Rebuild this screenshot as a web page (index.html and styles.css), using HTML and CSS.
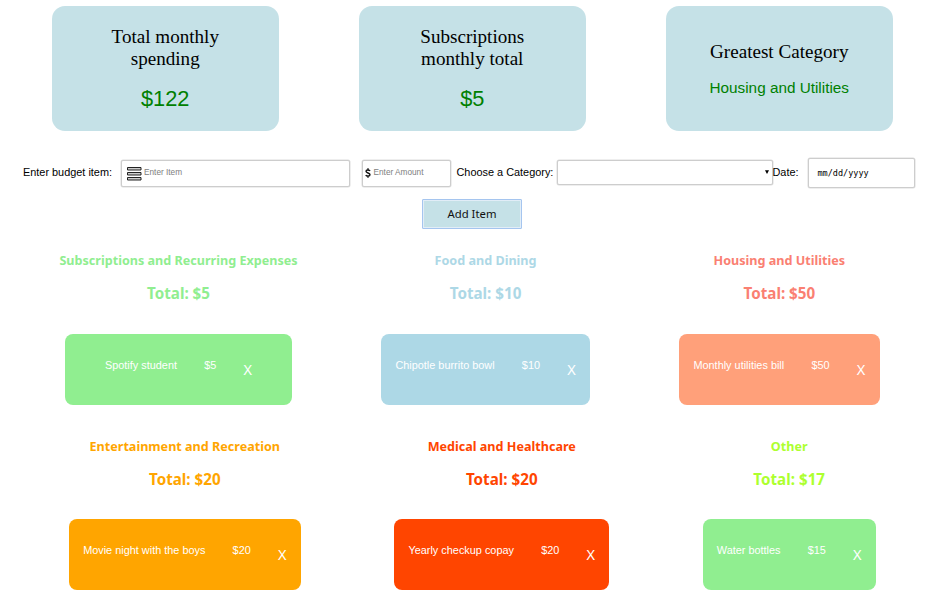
FILE: index.html
```html
<!DOCTYPE html>
<html lang="en">
<head>
<meta charset="utf-8">
<title>Budget</title>
<link rel="stylesheet" href="styles.css">
</head>
<body>
<section class="summary">
  <div class="summary-card"><h2>Total monthly<br>spending</h2><p class="amount">$122</p></div>
  <div class="summary-card"><h2>Subscriptions<br>monthly total</h2><p class="amount">$5</p></div>
  <div class="summary-card"><h2>Greatest Category</h2><p class="top-category">Housing and Utilities</p></div>
</section>

<form class="entry">
  <div class="fields">
    <span class="label item-label">Enter budget item:</span>
    <div class="field item-field">
      <svg width="15" height="15" viewBox="0 0 15 15" fill="#ccc" stroke="#222" stroke-width="1"><path d="M.5 1.500h13.500v2.500H.5zM.5 6.500h13.500v2.500H.5zM.5 11.500h13.500v2.500H.5z"/></svg>
      <span class="placeholder">Enter Item</span>
    </div>
    <div class="field amount-field">
      <svg width="6" height="10" viewBox="0 0 6 10" fill="none" stroke="#111" stroke-width="1.4"><path d="M5 3C4.500 1.600 1 1.500 1 3.300S5 4.900 5 6.700 1.400 8.400.8 6.900M3 .3v1.500M3 8.200v1.500"/></svg>
      <span class="placeholder">Enter Amount</span>
    </div>
    <span class="label category-label">Choose a Category:</span>
    <div class="field category-field"><svg width="4" height="4" viewBox="0 0 4 4"><path d="M0 .3h4L2 4z" fill="#000"/></svg></div>
    <span class="label date-label">Date:</span>
    <div class="field date-field">mm/dd/yyyy</div>
  </div>
  <button type="button" class="add">Add Item</button>
</form>

<section class="row row-first">
  <article class="category green w-subs"><h3>Subscriptions and Recurring Expenses</h3><h4>Total: $5</h4>
    <div class="expense"><span>Spotify student</span><span>$5</span><b>X</b></div></article>
  <article class="category blue w-food"><h3>Food and Dining</h3><h4>Total: $10</h4>
    <div class="expense"><span>Chipotle burrito bowl</span><span>$10</span><b>X</b></div></article>
  <article class="category salmon w-house"><h3>Housing and Utilities</h3><h4>Total: $50</h4>
    <div class="expense"><span>Monthly utilities bill</span><span>$50</span><b>X</b></div></article>
</section>
<section class="row row-second">
  <article class="category orange w-fun"><h3>Entertainment and Recreation</h3><h4>Total: $20</h4>
    <div class="expense"><span>Movie night with the boys</span><span>$20</span><b>X</b></div></article>
  <article class="category red w-med"><h3>Medical and Healthcare</h3><h4>Total: $20</h4>
    <div class="expense"><span>Yearly checkup copay</span><span>$20</span><b>X</b></div></article>
  <article class="category lime w-other"><h3>Other</h3><h4>Total: $17</h4>
    <div class="expense"><span>Water bottles</span><span>$15</span><b>X</b></div></article>
</section>
</body>
</html>
```
FILE: styles.css
```css
* { box-sizing: border-box; }
html { overflow: hidden; }
body {
  margin: 0;
  height: 592px;
  overflow: hidden;
  background: #fff;
  color: #000;
  font: 10.9px/13px "Liberation Sans", Arial, sans-serif;
}
h2, h3, h4, p { margin: 0; }

.summary { display: flex; gap: 80.5px; padding: 6px 0 0 52px; }
.summary-card {
  width: 226.5px;
  height: 125px;
  border-radius: 13px;
  background: #c5e1e7;
  text-align: center;
  display: flex;
  flex-direction: column;
  justify-content: center;
}
.summary-card h2 { font: 400 19.1px/22px "Liberation Serif", "Times New Roman", serif; }
.summary-card p { color: green; }
.amount { font-size: 21.8px; line-height: 25px; margin-top: 16px; }
.top-category { font-size: 15.3px; line-height: 18px; margin-top: 16px; }

.fields { display: flex; align-items: center; height: 32px; margin-top: 26px; padding-left: 23px; }
.label { white-space: nowrap; flex: none; position: relative; top: -1px; }
.item-label { width: 98px; }
.category-label { width: 100.5px; margin-left: 6px; }
.date-label { width: 35px; }
.field {
  flex: none;
  display: flex;
  align-items: center;
  border: 1px solid #cdcdcd;
  box-shadow: 0 0 0 0.5px #dedede;
  border-radius: 2px;
  background: #fff;
}
.item-field { width: 228.5px; height: 27px; padding-left: 5px; gap: 2px; }
.amount-field { width: 89px; height: 27px; margin-left: 12px; padding-left: 2px; gap: 3px; }
.category-field { width: 215.5px; height: 25px; margin-top: -2px; justify-content: flex-end; padding-right: 3px; }
.date-field {
  width: 107px;
  height: 30px;
  padding-left: 9px;
  font: 8.5px/12px "DejaVu Sans Mono", monospace;
}
.placeholder { color: #808080; font-size: 8.25px; line-height: 12px; }

.add {
  display: block;
  width: 100px;
  height: 30px;
  margin: 10px 0 0 422px;
  padding: 0;
  border: 1px solid #a5c5ef;
  border-radius: 1px;
  box-shadow: inset 0 0 0 1px #e1edf7;
  background: #c5e1e7;
  color: #111;
  font: 11.3px/16px "Noto Sans", sans-serif;
}

.row { display: flex; }
.row-first { gap: 89.3px; padding: 22px 0 0 65px; }
.row-second { gap: 93.2px; padding: 32px 0 0 68.8px; }
.category { flex: none; display: flex; flex-direction: column; align-items: center; }
.category h3, .category h4 { font-family: "Noto Sans", sans-serif; font-weight: 700; white-space: nowrap; }
.category h3 { font-size: 12.6px; line-height: 20px; }
.category h4 { font-size: 15.2px; line-height: 22px; margin-top: 11px; }
.w-subs { width: 227px; }
.w-food { width: 208.5px; }
.w-house { width: 200.5px; }
.w-fun { width: 232px; }
.w-med { width: 215.5px; }
.w-other { width: 173px; }

.expense {
  width: 100%;
  height: 71px;
  margin-top: 29.5px;
  padding-top: 25px;
  border-radius: 8px;
  color: #fff;
  display: flex;
  justify-content: center;
  gap: 27.2px;
}
.expense b { font: 400 14.5px/20px "Noto Sans", sans-serif; }
.green { color: lightgreen; }
.green .expense, .lime .expense { background: lightgreen; }
.blue { color: lightblue; }
.blue .expense { background: lightblue; }
.salmon { color: salmon; }
.salmon .expense { background: lightsalmon; }
.orange { color: orange; }
.orange .expense { background: orange; }
.red { color: orangered; }
.red .expense { background: orangered; }
.lime { color: greenyellow; }
```
